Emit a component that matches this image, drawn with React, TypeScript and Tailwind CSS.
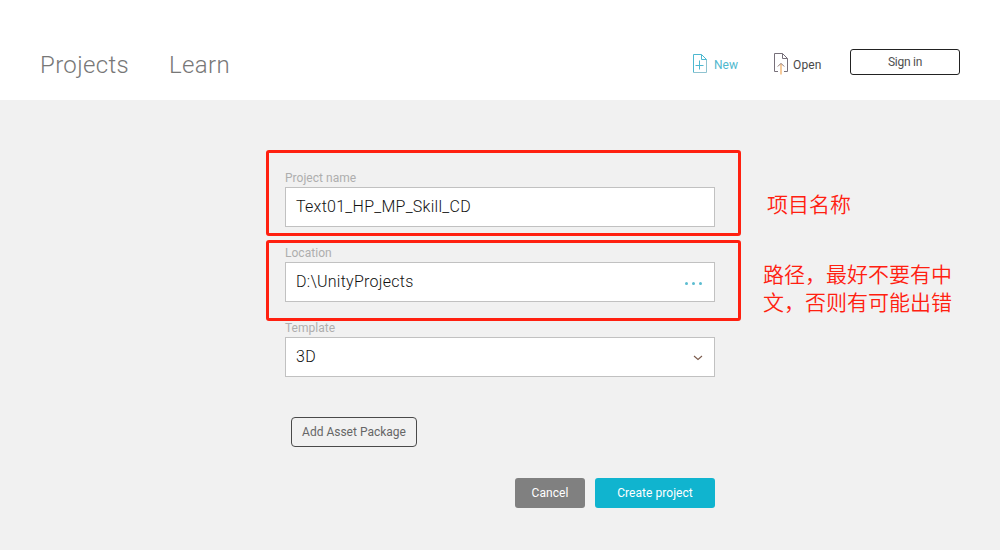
import type { ReactNode } from "react";

function NewFileIcon() {
  return (
    <svg className="h-6 w-4 shrink-0" viewBox="0 0 16 24" fill="none" stroke="#4db8d0">
      <path d="M9.5 2.5H1.5V20.5" />
      <path d="M1.5 20.5H14.5V7.5" stroke="#8fc3d0" />
      <path d="M9.5 2.5V7.5H14.5L9.5 2.5" />
      <path d="M7.5 8.5V17.5M3.5 13.5H11.5" />
    </svg>
  );
}

function OpenFileIcon() {
  return (
    <svg className="h-6 w-4 shrink-0" viewBox="0 0 16 24" fill="none">
      <path d="M5 19.5H1.5V1.5H9.5L14.5 6.5V19.5H11M9.5 1.5V6.5H14.5" stroke="#77707a" />
      <path d="M8 12V22.5" stroke="#f2b673" strokeWidth="1.4" />
      <path d="M4.8 14.5L8 11.3L11.2 14.5" stroke="#8d7772" />
    </svg>
  );
}

function Field({ label, value, children }: { label: string; value: string; children?: ReactNode }) {
  return (
    <div className="flex flex-col">
      <label className="h-[17px] text-[12px] leading-[16px] tracking-[0.03px] text-[#aeaeae]">{label}</label>
      <div className="flex h-10 items-center justify-between border border-[#c1c1c1] bg-white pr-3 pl-2.5">
        <span className="text-[16px] leading-5 font-light tracking-[0.27px] text-[#111111]">{value}</span>
        {children}
      </div>
    </div>
  );
}

export default function App() {
  return (
    <div className="relative flex h-[550px] w-[1000px] flex-col overflow-hidden bg-[#f1f1f1] font-['Roboto','Noto_Sans_CJK_SC',sans-serif]">
      <header className="flex h-[100px] shrink-0 items-start justify-between bg-white pr-10 pl-10">
        <nav className="flex gap-10 pt-[49px] text-[24px] leading-8 font-light tracking-[0.35px] text-[#777777]">
          <a>Projects</a>
          <a>Learn</a>
        </nav>
        <div className="flex pt-[49px]">
          <button className="mt-[3px] flex h-6 w-[81px] items-center gap-1.5 text-[12px] text-[#50b8ce]">
            <NewFileIcon />
            <span className="pt-0.5">New</span>
          </button>
          <button className="mt-[3px] flex h-6 w-[77px] items-center gap-1 text-[12px] text-[#484848]">
            <OpenFileIcon />
            <span className="pt-0.5 tracking-[0.15px]">Open</span>
          </button>
          <button className="h-[26px] w-[110px] rounded-[3px] border border-[#222222] text-[12px] leading-6 tracking-[-0.25px] text-[#505050]">
            Sign in
          </button>
        </div>
      </header>

      <main className="ml-[285px] flex w-[430px] flex-col pt-[70px]">
        <div className="flex flex-col gap-[18px]">
          <Field label="Project name" value="Text01_HP_MP_Skill_CD" />
          <Field label="Location" value="D:\UnityProjects">
            <span className="mt-0.5 flex gap-1">
              <i className="size-[3px] rounded-full bg-[#5bbcd0]" />
              <i className="size-[3px] rounded-full bg-[#5bbcd0]" />
              <i className="size-[3px] rounded-full bg-[#5bbcd0]" />
            </span>
          </Field>
          <Field label="Template" value="3D">
            <svg className="mt-0.5 -mr-px h-2 w-2.5" viewBox="0 0 10 8" fill="none" stroke="#7b5b4c" strokeWidth="1.1">
              <path d="M1 2L5 5.5L9 2" />
            </svg>
          </Field>
        </div>
        <button className="mt-10 ml-1.5 h-[30px] w-[126px] rounded-[4px] border border-[#4a4a4a] text-[12px] leading-7 text-[#666666]">
          Add Asset Package
        </button>
        <div className="mt-[31px] flex justify-end gap-2.5 text-[12px] tracking-[0.05px] text-white">
          <button className="h-[30px] w-[70px] rounded-[3px] bg-[#808080]">Cancel</button>
          <button className="h-[30px] w-[120px] rounded-[3px] bg-[#10b4cf]">Create project</button>
        </div>
      </main>

      <div className="absolute top-[150px] left-[266px] h-[86px] w-[475px] rounded-[3px] border-3 border-[#ff2010]" />
      <div className="absolute top-[240px] left-[266px] h-[81px] w-[475px] rounded-[3px] border-3 border-[#ff2010]" />
      <p className="absolute top-[189px] left-[767px] font-['Noto_Sans_CJK_SC',sans-serif] text-[21px] leading-7 font-[350] whitespace-nowrap text-[#ff2010]">
        项目名称
      </p>
      <p className="absolute top-[259px] left-[763px] font-['Noto_Sans_CJK_SC',sans-serif] text-[21px] leading-7 font-[350] whitespace-nowrap text-[#ff2010]">
        路径，最好不要有中
        <br />
        文，否则有可能出错
      </p>
    </div>
  );
}
